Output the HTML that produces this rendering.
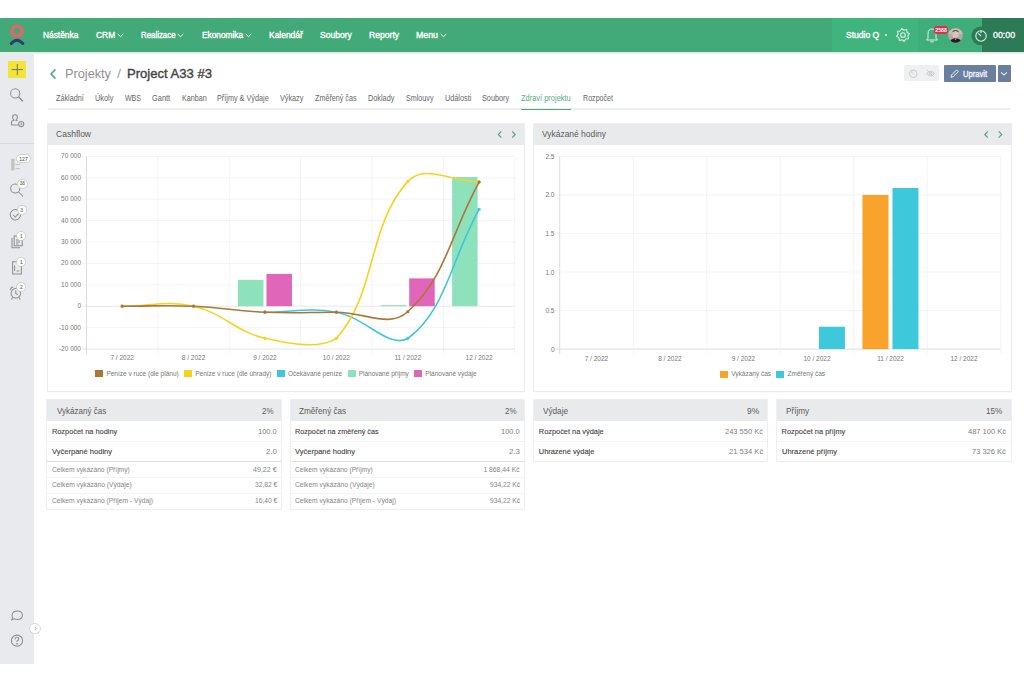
<!DOCTYPE html>
<html><head><meta charset="utf-8"><style>
html,body{margin:0;padding:0}
body{width:1024px;height:683px;position:relative;overflow:hidden;background:#fff;font-family:"Liberation Sans",sans-serif}
.t{position:absolute;white-space:nowrap;line-height:20px;height:20px;transform-origin:0 50%}
.b{position:absolute}
</style></head><body>
<div class="b" style="left:0.00px;top:18.00px;width:1024.00px;height:34.00px;background:#42aa78;"></div>
<div class="b" style="left:832.00px;top:18.00px;width:86.00px;height:34.00px;background:#3fb47c;"></div>
<div class="b" style="left:918.00px;top:18.00px;width:64.00px;height:34.00px;background:#40ae7a;"></div>
<div class="b" style="left:982.00px;top:18.00px;width:42.00px;height:34.00px;background:#2d7b56;"></div>
<div class="b" style="left:0.00px;top:52.00px;width:1024.00px;height:2.50px;background:linear-gradient(#dfe0e2,rgba(255,255,255,0));"></div>
<svg class="b" style="left:0;top:18px" width="34" height="34" viewBox="0 0 34 34">
<circle cx="17" cy="13.1" r="5.1" fill="none" stroke="#e0676a" stroke-width="3.6"/>
<path d="M11.2,25.5 Q17,18.8 22.8,25.5" fill="none" stroke="#2d3e73" stroke-width="3" stroke-linecap="round"/>
</svg>
<div class="t" style="left:43.00px;top:25.00px;font-size:9.8px;color:#fff;transform:scaleX(0.853);-webkit-text-stroke:0.39px #fff;">Nástěnka</div>
<div class="t" style="left:95.80px;top:25.00px;font-size:9.8px;color:#fff;transform:scaleX(0.860);-webkit-text-stroke:0.39px #fff;">CRM</div>
<svg class="b" style="left:116.5px;top:33px" width="7" height="5" viewBox="0 0 7 5"><path d="M0.7,1 L3.5,3.7 L6.3,1" fill="none" stroke="#f4fbf7" stroke-width="1"/></svg>
<div class="t" style="left:141.00px;top:25.00px;font-size:9.8px;color:#fff;transform:scaleX(0.802);-webkit-text-stroke:0.39px #fff;">Realizace</div>
<svg class="b" style="left:177.0px;top:33px" width="7" height="5" viewBox="0 0 7 5"><path d="M0.7,1 L3.5,3.7 L6.3,1" fill="none" stroke="#f4fbf7" stroke-width="1"/></svg>
<div class="t" style="left:202.00px;top:25.00px;font-size:9.8px;color:#fff;transform:scaleX(0.846);-webkit-text-stroke:0.39px #fff;">Ekonomika</div>
<svg class="b" style="left:244.5px;top:33px" width="7" height="5" viewBox="0 0 7 5"><path d="M0.7,1 L3.5,3.7 L6.3,1" fill="none" stroke="#f4fbf7" stroke-width="1"/></svg>
<div class="t" style="left:269.00px;top:25.00px;font-size:9.8px;color:#fff;transform:scaleX(0.862);-webkit-text-stroke:0.39px #fff;">Kalendář</div>
<div class="t" style="left:319.60px;top:25.00px;font-size:9.8px;color:#fff;transform:scaleX(0.874);-webkit-text-stroke:0.39px #fff;">Soubory</div>
<div class="t" style="left:368.60px;top:25.00px;font-size:9.8px;color:#fff;transform:scaleX(0.877);-webkit-text-stroke:0.39px #fff;">Reporty</div>
<div class="t" style="left:416.00px;top:25.00px;font-size:9.8px;color:#fff;transform:scaleX(0.897);-webkit-text-stroke:0.39px #fff;">Menu</div>
<svg class="b" style="left:439.5px;top:33px" width="7" height="5" viewBox="0 0 7 5"><path d="M0.7,1 L3.5,3.7 L6.3,1" fill="none" stroke="#f4fbf7" stroke-width="1"/></svg>
<div class="t" style="left:845.80px;top:25.00px;font-size:9.8px;color:#fff;transform:scaleX(0.871);-webkit-text-stroke:0.39px #fff;">Studio Q</div>
<div class="b" style="left:884.5px;top:34px;width:2.2px;height:2.2px;border-radius:2px;background:#e8f5ee"></div>
<svg class="b" style="left:0;top:0" width="1024" height="60"><path d="M909.47,33.71 L907.81,35.96 L908.49,38.67 L905.72,39.07 L904.29,41.47 L902.04,39.81 L899.33,40.49 L898.93,37.72 L896.53,36.29 L898.19,34.04 L897.51,31.33 L900.28,30.93 L901.71,28.53 L903.96,30.19 L906.67,29.51 L907.07,32.28Z" fill="none" stroke="#d9f2e5" stroke-width="1.1" stroke-linejoin="round"/><circle cx="903" cy="35" r="2.3" fill="none" stroke="#d9f2e5" stroke-width="1.1"/><path d="M926.6,40 L928,38.2 L928,33.8 Q928,29 932,29 Q936,29 936,33.8 L936,38.2 L937.4,40 Z" fill="none" stroke="#d9f2e5" stroke-width="1"/><path d="M930.3,41.8 L933.7,41.8" stroke="#d9f2e5" stroke-width="1"/><circle cx="980.7" cy="35.8" r="9.3" fill="#2d7b56"/><circle cx="981" cy="36" r="5.2" fill="none" stroke="#d9f2e5" stroke-width="1.1"/><path d="M981,30.8 L981,33 M978.5,33.5 L981,36" stroke="#d9f2e5" stroke-width="1.1"/></svg>
<div class="b" style="left:934px;top:26.4px;width:14px;height:7.2px;border-radius:3px;background:#e32b4e"></div>
<div class="t" style="left:935.25px;top:20.00px;font-size:5.2px;color:#fff;font-weight:700;">2588</div>
<svg class="b" style="left:947.5px;top:27.6px" width="15" height="15" viewBox="0 0 15 15"><defs><clipPath id="av"><circle cx="7.5" cy="7.5" r="7.3"/></clipPath></defs>
<g clip-path="url(#av)"><rect width="15" height="15" fill="#b9a7a6"/><rect x="0" y="0" width="15" height="6" fill="#c9bcbc"/>
<ellipse cx="7.6" cy="6.6" rx="3.1" ry="3.8" fill="#d9c2b6"/><path d="M4.4,4.6 Q7.5,1.6 10.8,4.6 L10.6,3.2 Q7.5,0.9 4.5,3.2Z" fill="#5b4b45"/>
<path d="M6,9.6 Q7.6,11 9.2,9.6 L9.4,10.4 Q7.6,11.8 5.8,10.4Z" fill="#6f5a52"/>
<path d="M1.5,15 Q2.5,11 6,10.6 L7.6,12 L9.2,10.6 Q12.8,11 13.6,15Z" fill="#1f1f22"/></g></svg>
<div class="t" style="left:993.00px;top:25.00px;font-size:9.8px;color:#fff;transform:scaleX(0.905);-webkit-text-stroke:0.34px #fff;">00:00</div>
<div class="b" style="left:0.00px;top:52.00px;width:34.00px;height:612.00px;background:#e9eaed;"></div>
<div class="b" style="left:0.00px;top:143.00px;width:34.00px;height:1.00px;background:#d7d8da;"></div>
<div class="b" style="left:8.20px;top:61.00px;width:17.50px;height:17.40px;background:#f2e43a;"></div>
<svg class="b" style="left:0;top:0" width="40" height="683" viewBox="0 0 40 683" fill="none" stroke="#8e8e8e" stroke-width="1.05">
<path d="M17.3,64 L17.3,75.2 M11.7,69.6 L22.9,69.6" stroke="#6b6a50" stroke-width="0.9"/>
<circle cx="15.2" cy="93.4" r="4.6"/><path d="M18.5,96.8 L22.8,101.3" stroke-width="1.3"/>
<path d="M11.5,125 L11.5,122.5 Q11.5,121 13,120.6 L14,120.2 Q12.6,118.8 12.6,117.2 Q12.6,114.8 15,114.8 Q17.4,114.8 17.4,117.2 Q17.4,118.8 16,120.2 L17.5,120.8 M11.5,125 L18.4,125"/>
<circle cx="21.2" cy="124" r="2.6"/><path d="M21.2,122.8 L21.2,124.2 L22.2,124.2"/>
<rect x="11.2" y="158.8" width="3.3" height="11.6" fill="#c2c2c2" stroke="none"/>
<path d="M15.5,164.5 L20,164.5 M15.5,168.6 L20,168.6" stroke="#b9b9b9" stroke-width="0.8"/>
<circle cx="15.2" cy="188.5" r="4.6"/><path d="M18.6,192 L23,196.5"/>
<path d="M19.5,211.5 A5.2,5.2 0 1 0 20.6,214.8"/><path d="M13.2,215 L15.2,217 L18.6,213.6"/>
<rect x="14.2" y="236" width="8" height="9.8"/><path d="M12,238 L12,247.8 L20.2,247.8 M16,240 L20,240 M16,242 L20,242 M16,244 L18.5,244"/>
<path d="M12.6,261.8 L19,261.8 L21.4,264.2 L21.4,274 L12.6,274 Z M14.6,265.5 L14.6,271 M16.6,271 L19.4,271"/>
<circle cx="15.8" cy="293.2" r="4.8"/><path d="M15.8,290.4 L15.8,293.4 L17.8,294.8 M10.4,289.8 Q10.6,287.2 13.2,287 M12.6,297.4 L11.4,299.4 M19,297.4 L20.2,299.4"/>
<path d="M12.6,617.6 L11.8,619.8 L14.4,618.8 Q16,619.4 17.3,619.4 Q22.4,619.4 22.4,615.2 Q22.4,611 17.3,611 Q12.2,611 12.2,615.2 Q12.2,616.6 12.6,617.6 Z"/>
<circle cx="17" cy="640.7" r="5.6"/><path d="M15.2,639.2 Q15.2,637.2 17,637.2 Q18.8,637.2 18.8,639 Q18.8,640.3 17,641 L17,642" /><circle cx="17" cy="643.8" r="0.35" fill="#8e8e8e"/>
</svg>
<div class="b" style="left:16.6px;top:154.8px;width:13.799999999999997px;height:7.399999999999977px;border-radius:4px;background:#fff;box-shadow:0 0 0 0.8px #c9c9c9"></div>
<div class="t" style="left:19.33px;top:148.50px;font-size:5px;color:#6a6a6a;-webkit-text-stroke:0.10px #6a6a6a;">127</div>
<div class="b" style="left:18px;top:179.6px;width:8.600000000000001px;height:8.599999999999994px;border-radius:4px;background:#fff;box-shadow:0 0 0 0.8px #c9c9c9"></div>
<div class="t" style="left:19.74px;top:173.90px;font-size:4.6px;color:#6a6a6a;-webkit-text-stroke:0.09px #6a6a6a;">38</div>
<div class="b" style="left:17.6px;top:205.6px;width:8.0px;height:8.0px;border-radius:4px;background:#fff;box-shadow:0 0 0 0.8px #c9c9c9"></div>
<div class="t" style="left:20.21px;top:199.60px;font-size:5px;color:#6a6a6a;-webkit-text-stroke:0.10px #6a6a6a;">3</div>
<div class="b" style="left:17.3px;top:231.8px;width:8.0px;height:8.0px;border-radius:4px;background:#fff;box-shadow:0 0 0 0.8px #c9c9c9"></div>
<div class="t" style="left:19.91px;top:225.80px;font-size:5px;color:#6a6a6a;-webkit-text-stroke:0.10px #6a6a6a;">1</div>
<div class="b" style="left:17.3px;top:257.5px;width:8.0px;height:8.0px;border-radius:4px;background:#fff;box-shadow:0 0 0 0.8px #c9c9c9"></div>
<div class="t" style="left:19.91px;top:251.50px;font-size:5px;color:#6a6a6a;-webkit-text-stroke:0.10px #6a6a6a;">1</div>
<div class="b" style="left:17.3px;top:283.2px;width:8.0px;height:8.0px;border-radius:4px;background:#fff;box-shadow:0 0 0 0.8px #c9c9c9"></div>
<div class="t" style="left:19.91px;top:277.20px;font-size:5px;color:#6a6a6a;-webkit-text-stroke:0.10px #6a6a6a;">2</div>
<div class="b" style="left:30px;top:623.7px;width:9.6px;height:9.6px;border-radius:50%;background:#fff;box-shadow:0 0 0 0.7px #cfcfcf"></div>
<svg class="b" style="left:33px;top:626px" width="5" height="5" viewBox="0 0 5 5"><path d="M1.6,0.8 L3.3,2.5 L1.6,4.2" fill="none" stroke="#999" stroke-width="0.8"/></svg>
<svg class="b" style="left:48px;top:67px" width="10" height="14" viewBox="0 0 10 14"><path d="M7.4,2.4 L3.1,7 L7.4,11.6" fill="none" stroke="#55a78d" stroke-width="1.6"/></svg>
<div class="t" style="left:65.00px;top:63.90px;font-size:13.5px;color:#8f8f8f;transform:scaleX(0.943);">Projekty</div>
<div class="t" style="left:117.00px;top:63.90px;font-size:13.5px;color:#a0a0a0;transform:scaleX(1.067);">/</div>
<div class="t" style="left:126.70px;top:63.90px;font-size:13.5px;color:#444;transform:scaleX(0.967);-webkit-text-stroke:0.40px #444;">Project A33 #3</div>
<div class="t" style="left:56.10px;top:88.50px;font-size:8.2px;color:#666;transform:scaleX(0.887);">Základní</div>
<div class="t" style="left:94.80px;top:88.50px;font-size:8.2px;color:#666;transform:scaleX(0.897);">Úkoly</div>
<div class="t" style="left:125.00px;top:88.50px;font-size:8.2px;color:#666;transform:scaleX(0.857);">WBS</div>
<div class="t" style="left:152.20px;top:88.50px;font-size:8.2px;color:#666;transform:scaleX(0.907);">Gantt</div>
<div class="t" style="left:181.50px;top:88.50px;font-size:8.2px;color:#666;transform:scaleX(0.881);">Kanban</div>
<div class="t" style="left:217.30px;top:88.50px;font-size:8.2px;color:#666;transform:scaleX(0.888);">Příjmy & Výdaje</div>
<div class="t" style="left:280.30px;top:88.50px;font-size:8.2px;color:#666;transform:scaleX(0.885);">Výkazy</div>
<div class="t" style="left:314.80px;top:88.50px;font-size:8.2px;color:#666;transform:scaleX(0.878);">Změřený čas</div>
<div class="t" style="left:367.50px;top:88.50px;font-size:8.2px;color:#666;transform:scaleX(0.891);">Doklady</div>
<div class="t" style="left:405.60px;top:88.50px;font-size:8.2px;color:#666;transform:scaleX(0.875);">Smlouvy</div>
<div class="t" style="left:444.90px;top:88.50px;font-size:8.2px;color:#666;transform:scaleX(0.888);">Události</div>
<div class="t" style="left:482.40px;top:88.50px;font-size:8.2px;color:#666;transform:scaleX(0.891);">Soubory</div>
<div class="t" style="left:521.00px;top:88.50px;font-size:8.2px;color:#55ae85;transform:scaleX(0.911);">Zdraví projektu</div>
<div class="t" style="left:582.60px;top:88.50px;font-size:8.2px;color:#666;transform:scaleX(0.869);">Rozpočet</div>
<div class="b" style="left:48.00px;top:108.40px;width:962.00px;height:2.10px;background:#eeeeee;"></div>
<div class="b" style="left:521.00px;top:108.50px;width:50.00px;height:1.90px;background:#48a97a;"></div>
<div class="b" style="left:904.00px;top:65.30px;width:35.00px;height:15.90px;background:#eef0f2;border-radius:2px;"></div>
<svg class="b" style="left:904px;top:65px" width="36" height="17" viewBox="0 0 36 17" fill="none" stroke="#c5c8cc" stroke-width="0.9">
<circle cx="9.3" cy="8.7" r="3.8"/><path d="M9.3,4.9 L9.3,6.3 M7,6.6 L9.3,8.7"/>
<path d="M22.5,8.5 Q26.5,4.2 30.5,8.5 Q26.5,12.8 22.5,8.5 Z"/><circle cx="26.5" cy="8.5" r="1.4"/><path d="M23,4.8 L30,12.2"/>
</svg>
<div class="b" style="left:943.80px;top:65.20px;width:52.20px;height:16.80px;background:#6a7ea0;border-radius:1px;"></div>
<div class="b" style="left:997.60px;top:65.20px;width:13.10px;height:16.80px;background:#6a7ea0;border-radius:1px;"></div>
<svg class="b" style="left:943px;top:65px" width="68" height="17" viewBox="0 0 68 17" fill="none" stroke="#e9edf4" stroke-width="1">
<path d="M8,12.3 L8.5,10 L13.6,4.9 L15.3,6.6 L10.2,11.7 Z"/>
<path d="M58,7.3 L61,10 L64,7.3" stroke-width="1.1"/>
</svg>
<div class="t" style="left:962.80px;top:63.80px;font-size:8.6px;color:#eef1f6;transform:scaleX(0.881);-webkit-text-stroke:0.39px #eef1f6;">Upravit</div>
<div class="b" style="left:48px;top:123.6px;width:476px;height:267.70000000000005px;background:#fff;box-shadow:0 0 0 0.8px #e9e9e9, 0 0.6px 1.2px rgba(0,0,0,0.06)"></div>
<div class="b" style="left:48.00px;top:123.60px;width:476.00px;height:21.20px;background:#e9eaec;"></div>
<div class="t" style="left:56.00px;top:124.20px;font-size:9px;color:#5b5b5b;transform:scaleX(0.946);">Cashflow</div>
<div class="b" style="left:534.2px;top:123.6px;width:476.5999999999999px;height:267.70000000000005px;background:#fff;box-shadow:0 0 0 0.8px #e9e9e9, 0 0.6px 1.2px rgba(0,0,0,0.06)"></div>
<div class="b" style="left:534.20px;top:123.60px;width:476.60px;height:21.20px;background:#e9eaec;"></div>
<div class="t" style="left:542.20px;top:124.20px;font-size:9px;color:#5b5b5b;transform:scaleX(0.938);">Vykázané hodiny</div>
<svg class="b" style="left:0;top:0" width="1024" height="160" fill="none" stroke="#6a9e8f" stroke-width="1.2"><path d="M501.3,131.3 L498.3,134.5 L501.3,137.7"/><path d="M512.2,131.3 L515.2,134.5 L512.2,137.7"/></svg>
<svg class="b" style="left:0;top:0" width="1024" height="160" fill="none" stroke="#6a9e8f" stroke-width="1.2"><path d="M987.8,131.3 L984.8,134.5 L987.8,137.7"/><path d="M998.7,131.3 L1001.7,134.5 L998.7,137.7"/></svg>
<svg class="b" style="left:0;top:0" width="1024" height="400"><path d="M81.8,156.40 L514.8,156.40" stroke="#efefef" stroke-width="0.7"/><path d="M81.8,177.80 L514.8,177.80" stroke="#efefef" stroke-width="0.7"/><path d="M81.8,199.20 L514.8,199.20" stroke="#efefef" stroke-width="0.7"/><path d="M81.8,220.60 L514.8,220.60" stroke="#efefef" stroke-width="0.7"/><path d="M81.8,242.00 L514.8,242.00" stroke="#efefef" stroke-width="0.7"/><path d="M81.8,263.40 L514.8,263.40" stroke="#efefef" stroke-width="0.7"/><path d="M81.8,284.80 L514.8,284.80" stroke="#efefef" stroke-width="0.7"/><path d="M81.8,306.20 L514.8,306.20" stroke="#e0e0e0" stroke-width="0.7"/><path d="M81.8,327.60 L514.8,327.60" stroke="#efefef" stroke-width="0.7"/><path d="M81.8,349.00 L514.8,349.00" stroke="#dadada" stroke-width="0.7"/><path d="M86.50,156.4 L86.50,354.0" stroke="#cfcfcf" stroke-width="0.7"/><path d="M157.88,156.4 L157.88,354.0" stroke="#efefef" stroke-width="0.7"/><path d="M229.27,156.4 L229.27,354.0" stroke="#efefef" stroke-width="0.7"/><path d="M300.65,156.4 L300.65,354.0" stroke="#efefef" stroke-width="0.7"/><path d="M372.03,156.4 L372.03,354.0" stroke="#efefef" stroke-width="0.7"/><path d="M443.42,156.4 L443.42,354.0" stroke="#efefef" stroke-width="0.7"/><path d="M514.80,156.4 L514.80,354.0" stroke="#efefef" stroke-width="0.7"/><rect x="237.96" y="279.88" width="25.5" height="26.32" fill="#8de2bc"/><rect x="266.46" y="273.89" width="25.5" height="32.31" fill="#e066b9"/><rect x="380.72" y="305.13" width="25.5" height="1.07" fill="#8de2bc"/><rect x="409.22" y="278.38" width="25.5" height="27.82" fill="#e066b9"/><rect x="452.11" y="176.94" width="25.5" height="129.26" fill="#8de2bc"/><path d="M264.96,312.19 C293.51,312.19 308.70,307.10 336.34,312.19 C365.80,317.62 388.31,349.00 407.72,338.51 C445.41,311.34 450.55,260.96 479.11,209.26" fill="none" stroke="#3ec7dc" stroke-width="1.6"/><circle cx="264.96" cy="312.19" r="1.6" fill="#3ec7dc"/><circle cx="336.34" cy="312.19" r="1.6" fill="#3ec7dc"/><circle cx="407.72" cy="338.51" r="1.6" fill="#3ec7dc"/><circle cx="479.11" cy="209.26" r="1.6" fill="#3ec7dc"/><path d="M122.19,306.20 C150.75,306.20 166.34,300.08 193.57,306.20 C223.44,312.92 235.09,331.58 264.96,338.30 C292.20,344.42 319.60,349.00 336.34,338.30 C376.71,294.01 367.36,225.94 407.72,181.65 C424.46,163.29 450.55,181.65 479.11,181.65" fill="none" stroke="#f9d21e" stroke-width="1.6"/><circle cx="122.19" cy="306.20" r="1.6" fill="#f9d21e"/><circle cx="193.57" cy="306.20" r="1.6" fill="#f9d21e"/><circle cx="264.96" cy="338.30" r="1.6" fill="#f9d21e"/><circle cx="336.34" cy="338.30" r="1.6" fill="#f9d21e"/><circle cx="407.72" cy="181.65" r="1.6" fill="#f9d21e"/><circle cx="479.11" cy="181.65" r="1.6" fill="#f9d21e"/><path d="M122.19,306.20 C150.75,306.20 165.07,305.00 193.57,306.20 C222.18,307.40 236.35,310.99 264.96,312.19 C293.46,313.39 307.79,312.28 336.34,312.19 C364.90,312.11 389.15,328.70 407.72,311.76 C446.25,276.65 450.55,233.95 479.11,182.08" fill="none" stroke="#ad7634" stroke-width="1.6"/><circle cx="122.19" cy="306.20" r="1.6" fill="#ad7634"/><circle cx="193.57" cy="306.20" r="1.6" fill="#ad7634"/><circle cx="264.96" cy="312.19" r="1.6" fill="#ad7634"/><circle cx="336.34" cy="312.19" r="1.6" fill="#ad7634"/><circle cx="407.72" cy="311.76" r="1.6" fill="#ad7634"/><circle cx="479.11" cy="182.08" r="1.6" fill="#ad7634"/></svg>
<div class="t" style="left:61.12px;top:146.40px;font-size:6.5px;color:#777;">70 000</div>
<div class="t" style="left:61.12px;top:167.80px;font-size:6.5px;color:#777;">60 000</div>
<div class="t" style="left:61.12px;top:189.20px;font-size:6.5px;color:#777;">50 000</div>
<div class="t" style="left:61.12px;top:210.60px;font-size:6.5px;color:#777;">40 000</div>
<div class="t" style="left:61.12px;top:232.00px;font-size:6.5px;color:#777;">30 000</div>
<div class="t" style="left:61.12px;top:253.40px;font-size:6.5px;color:#777;">20 000</div>
<div class="t" style="left:61.12px;top:274.80px;font-size:6.5px;color:#777;">10 000</div>
<div class="t" style="left:77.38px;top:296.20px;font-size:6.5px;color:#777;">0</div>
<div class="t" style="left:58.95px;top:317.60px;font-size:6.5px;color:#777;">-10 000</div>
<div class="t" style="left:58.95px;top:339.00px;font-size:6.5px;color:#777;">-20 000</div>
<div class="t" style="left:110.45px;top:347.80px;font-size:6.5px;color:#777;">7 / 2022</div>
<div class="t" style="left:181.83px;top:347.80px;font-size:6.5px;color:#777;">8 / 2022</div>
<div class="t" style="left:253.21px;top:347.80px;font-size:6.5px;color:#777;">9 / 2022</div>
<div class="t" style="left:322.79px;top:347.80px;font-size:6.5px;color:#777;">10 / 2022</div>
<div class="t" style="left:394.41px;top:347.80px;font-size:6.5px;color:#777;">11 / 2022</div>
<div class="t" style="left:465.55px;top:347.80px;font-size:6.5px;color:#777;">12 / 2022</div>
<div class="b" style="left:95.33px;top:370.20px;width:8.00px;height:7.20px;background:#ad7634;"></div>
<div class="t" style="left:106.43px;top:363.80px;font-size:6.5px;color:#777;">Peníze v ruce (dle plánu)</div>
<div class="b" style="left:184.09px;top:370.20px;width:8.00px;height:7.20px;background:#f9d21e;"></div>
<div class="t" style="left:195.19px;top:363.80px;font-size:6.5px;color:#777;">Peníze v ruce (dle úhrady)</div>
<div class="b" style="left:276.83px;top:370.20px;width:8.00px;height:7.20px;background:#3ec7dc;"></div>
<div class="t" style="left:287.93px;top:363.80px;font-size:6.5px;color:#777;">Očekávané peníze</div>
<div class="b" style="left:347.53px;top:370.20px;width:8.00px;height:7.20px;background:#8de2bc;"></div>
<div class="t" style="left:358.63px;top:363.80px;font-size:6.5px;color:#777;">Plánované příjmy</div>
<div class="b" style="left:414.25px;top:370.20px;width:8.00px;height:7.20px;background:#e066b9;"></div>
<div class="t" style="left:425.35px;top:363.80px;font-size:6.5px;color:#777;">Plánované výdaje</div>
<svg class="b" style="left:0;top:0" width="1024" height="400"><path d="M555,156.40 L1000.7,156.40" stroke="#efefef" stroke-width="0.7"/><path d="M555,194.94 L1000.7,194.94" stroke="#efefef" stroke-width="0.7"/><path d="M555,233.48 L1000.7,233.48" stroke="#efefef" stroke-width="0.7"/><path d="M555,272.02 L1000.7,272.02" stroke="#efefef" stroke-width="0.7"/><path d="M555,310.56 L1000.7,310.56" stroke="#efefef" stroke-width="0.7"/><path d="M555,349.10 L1000.7,349.10" stroke="#cfcfcf" stroke-width="0.7"/><path d="M559.70,156.4 L559.70,354.1" stroke="#cfcfcf" stroke-width="0.7"/><path d="M633.20,156.4 L633.20,354.1" stroke="#efefef" stroke-width="0.7"/><path d="M706.70,156.4 L706.70,354.1" stroke="#efefef" stroke-width="0.7"/><path d="M780.20,156.4 L780.20,354.1" stroke="#efefef" stroke-width="0.7"/><path d="M853.70,156.4 L853.70,354.1" stroke="#efefef" stroke-width="0.7"/><path d="M927.20,156.4 L927.20,354.1" stroke="#efefef" stroke-width="0.7"/><path d="M1000.70,156.4 L1000.70,354.1" stroke="#efefef" stroke-width="0.7"/><rect x="818.95" y="326.75" width="26" height="22.35" fill="#3ec8dc"/><rect x="862.45" y="194.94" width="26" height="154.16" fill="#f9a22c"/><rect x="892.45" y="188.00" width="26" height="161.10" fill="#3ec8dc"/></svg>
<div class="t" style="left:545.46px;top:146.90px;font-size:6.5px;color:#777;">2.5</div>
<div class="t" style="left:545.46px;top:185.44px;font-size:6.5px;color:#777;">2.0</div>
<div class="t" style="left:545.46px;top:223.98px;font-size:6.5px;color:#777;">1.5</div>
<div class="t" style="left:545.46px;top:262.52px;font-size:6.5px;color:#777;">1.0</div>
<div class="t" style="left:545.46px;top:301.06px;font-size:6.5px;color:#777;">0.5</div>
<div class="t" style="left:550.88px;top:339.60px;font-size:6.5px;color:#777;">0</div>
<div class="t" style="left:584.70px;top:348.60px;font-size:6.5px;color:#777;">7 / 2022</div>
<div class="t" style="left:658.20px;top:348.60px;font-size:6.5px;color:#777;">8 / 2022</div>
<div class="t" style="left:731.70px;top:348.60px;font-size:6.5px;color:#777;">9 / 2022</div>
<div class="t" style="left:803.40px;top:348.60px;font-size:6.5px;color:#777;">10 / 2022</div>
<div class="t" style="left:877.14px;top:348.60px;font-size:6.5px;color:#777;">11 / 2022</div>
<div class="t" style="left:950.40px;top:348.60px;font-size:6.5px;color:#777;">12 / 2022</div>
<div class="b" style="left:720.09px;top:370.70px;width:8.00px;height:7.20px;background:#f9a22c;"></div>
<div class="t" style="left:731.19px;top:364.30px;font-size:6.5px;color:#777;">Vykázaný čas</div>
<div class="b" style="left:776.45px;top:370.70px;width:8.00px;height:7.20px;background:#3ec8dc;"></div>
<div class="t" style="left:787.55px;top:364.30px;font-size:6.5px;color:#777;">Změřený čas</div>
<div class="b" style="left:47.3px;top:400.4px;width:234.0px;height:108.80000000000001px;background:#fff;box-shadow:0 0 0 0.8px #ebebeb, 0 0.6px 1.2px rgba(0,0,0,0.04)"></div>
<div class="b" style="left:47.30px;top:400.40px;width:234.00px;height:20.80px;background:#e9eaec;"></div>
<div class="t" style="left:56.60px;top:400.80px;font-size:9.4px;color:#5b5b5b;transform:scaleX(0.855);">Vykázaný čas</div>
<div class="t" style="left:261.60px;top:401.00px;font-size:9.8px;color:#5e5e5e;transform:scaleX(0.812);">2%</div>
<div class="t" style="left:51.90px;top:421.70px;font-size:7.4px;color:#404040;-webkit-text-stroke:0.10px #404040;">Rozpočet na hodiny</div>
<div class="t" style="left:258.00px;top:421.70px;font-size:7.8px;color:#808080;transform:scaleX(0.963);">100.0</div>
<div class="t" style="left:51.90px;top:441.60px;font-size:7.4px;color:#404040;transform:scaleX(1.019);-webkit-text-stroke:0.10px #404040;">Vyčerpané hodiny</div>
<div class="t" style="left:265.80px;top:441.60px;font-size:7.8px;color:#808080;transform:scaleX(1.014);">2.0</div>
<div class="b" style="left:47.30px;top:441.20px;width:234.00px;height:0.70px;background:#f3f3f3;"></div>
<div class="b" style="left:47.30px;top:460.90px;width:234.00px;height:0.80px;background:#dedede;"></div>
<div class="t" style="left:51.90px;top:459.90px;font-size:6.6px;color:#858585;transform:scaleX(1.010);">Celkem vykázáno (Příjmy)</div>
<div class="t" style="left:253.10px;top:459.90px;font-size:6.8px;color:#858585;transform:scaleX(1.045);">49,22 €</div>
<div class="t" style="left:51.90px;top:474.60px;font-size:6.6px;color:#858585;transform:scaleX(1.017);">Celkem vykázáno (Výdaje)</div>
<div class="t" style="left:254.57px;top:474.60px;font-size:6.8px;color:#858585;transform:scaleX(0.980);">32,82 €</div>
<div class="t" style="left:51.90px;top:490.60px;font-size:6.6px;color:#858585;transform:scaleX(1.012);">Celkem vykázáno (Příjem - Výdaj)</div>
<div class="t" style="left:254.57px;top:490.60px;font-size:6.8px;color:#858585;transform:scaleX(0.980);">16,40 €</div>
<div class="b" style="left:47.30px;top:477.00px;width:234.00px;height:0.60px;background:#f3f3f3;"></div>
<div class="b" style="left:47.30px;top:492.80px;width:234.00px;height:0.60px;background:#f3f3f3;"></div>
<div class="b" style="left:290.8px;top:400.4px;width:233.7px;height:108.80000000000001px;background:#fff;box-shadow:0 0 0 0.8px #ebebeb, 0 0.6px 1.2px rgba(0,0,0,0.04)"></div>
<div class="b" style="left:290.80px;top:400.40px;width:233.70px;height:20.80px;background:#e9eaec;"></div>
<div class="t" style="left:299.00px;top:400.80px;font-size:9.4px;color:#5b5b5b;transform:scaleX(0.871);">Změřený čas</div>
<div class="t" style="left:504.80px;top:401.00px;font-size:9.8px;color:#5e5e5e;transform:scaleX(0.812);">2%</div>
<div class="t" style="left:295.40px;top:421.70px;font-size:7.4px;color:#404040;transform:scaleX(0.978);-webkit-text-stroke:0.10px #404040;">Rozpočet na změřený čas</div>
<div class="t" style="left:501.20px;top:421.70px;font-size:7.8px;color:#808080;transform:scaleX(0.963);">100.0</div>
<div class="t" style="left:295.40px;top:441.60px;font-size:7.4px;color:#404040;transform:scaleX(1.019);-webkit-text-stroke:0.10px #404040;">Vyčerpané hodiny</div>
<div class="t" style="left:509.00px;top:441.60px;font-size:7.8px;color:#808080;transform:scaleX(1.014);">2.3</div>
<div class="b" style="left:290.80px;top:441.20px;width:233.70px;height:0.70px;background:#f3f3f3;"></div>
<div class="b" style="left:290.80px;top:460.90px;width:233.70px;height:0.80px;background:#dedede;"></div>
<div class="t" style="left:295.40px;top:459.90px;font-size:6.6px;color:#858585;transform:scaleX(1.010);">Celkem vykázáno (Příjmy)</div>
<div class="t" style="left:483.40px;top:459.90px;font-size:6.8px;color:#858585;">1 868,44 Kč</div>
<div class="t" style="left:295.40px;top:474.60px;font-size:6.6px;color:#858585;transform:scaleX(1.017);">Celkem vykázáno (Výdaje)</div>
<div class="t" style="left:489.99px;top:474.60px;font-size:6.8px;color:#858585;transform:scaleX(0.980);">934,22 Kč</div>
<div class="t" style="left:295.40px;top:490.60px;font-size:6.6px;color:#858585;transform:scaleX(1.012);">Celkem vykázáno (Příjem - Výdaj)</div>
<div class="t" style="left:489.99px;top:490.60px;font-size:6.8px;color:#858585;transform:scaleX(0.980);">934,22 Kč</div>
<div class="b" style="left:290.80px;top:477.00px;width:233.70px;height:0.60px;background:#f3f3f3;"></div>
<div class="b" style="left:290.80px;top:492.80px;width:233.70px;height:0.60px;background:#f3f3f3;"></div>
<div class="b" style="left:534.2px;top:400.4px;width:233.29999999999995px;height:60.60000000000002px;background:#fff;box-shadow:0 0 0 0.8px #ebebeb, 0 0.6px 1.2px rgba(0,0,0,0.04)"></div>
<div class="b" style="left:534.20px;top:400.40px;width:233.30px;height:20.80px;background:#e9eaec;"></div>
<div class="t" style="left:542.70px;top:400.80px;font-size:9.4px;color:#5b5b5b;transform:scaleX(0.873);">Výdaje</div>
<div class="t" style="left:747.10px;top:401.00px;font-size:9.8px;color:#5e5e5e;transform:scaleX(0.861);">9%</div>
<div class="t" style="left:538.80px;top:421.70px;font-size:7.4px;color:#404040;-webkit-text-stroke:0.10px #404040;">Rozpočet na výdaje</div>
<div class="t" style="left:725.10px;top:421.70px;font-size:7.8px;color:#808080;transform:scaleX(0.960);">243 550 Kč</div>
<div class="t" style="left:538.80px;top:441.60px;font-size:7.4px;color:#404040;-webkit-text-stroke:0.10px #404040;">Uhrazené výdaje</div>
<div class="t" style="left:728.80px;top:441.60px;font-size:7.8px;color:#808080;transform:scaleX(0.974);">21 534 Kč</div>
<div class="b" style="left:534.20px;top:441.20px;width:233.30px;height:0.70px;background:#f3f3f3;"></div>
<div class="b" style="left:777px;top:400.4px;width:233.5px;height:60.60000000000002px;background:#fff;box-shadow:0 0 0 0.8px #ebebeb, 0 0.6px 1.2px rgba(0,0,0,0.04)"></div>
<div class="b" style="left:777.00px;top:400.40px;width:233.50px;height:20.80px;background:#e9eaec;"></div>
<div class="t" style="left:785.50px;top:400.80px;font-size:9.4px;color:#5b5b5b;transform:scaleX(0.871);">Příjmy</div>
<div class="t" style="left:986.00px;top:401.00px;font-size:9.8px;color:#5e5e5e;transform:scaleX(0.831);">15%</div>
<div class="t" style="left:781.60px;top:421.70px;font-size:7.4px;color:#404040;-webkit-text-stroke:0.10px #404040;">Rozpočet na příjmy</div>
<div class="t" style="left:968.00px;top:421.70px;font-size:7.8px;color:#808080;transform:scaleX(0.963);">487 100 Kč</div>
<div class="t" style="left:781.60px;top:441.60px;font-size:7.4px;color:#404040;transform:scaleX(1.013);-webkit-text-stroke:0.10px #404040;">Uhrazené příjmy</div>
<div class="t" style="left:972.20px;top:441.60px;font-size:7.8px;color:#808080;transform:scaleX(0.962);">73 326 Kč</div>
<div class="b" style="left:777.00px;top:441.20px;width:233.50px;height:0.70px;background:#f3f3f3;"></div>
</body></html>
